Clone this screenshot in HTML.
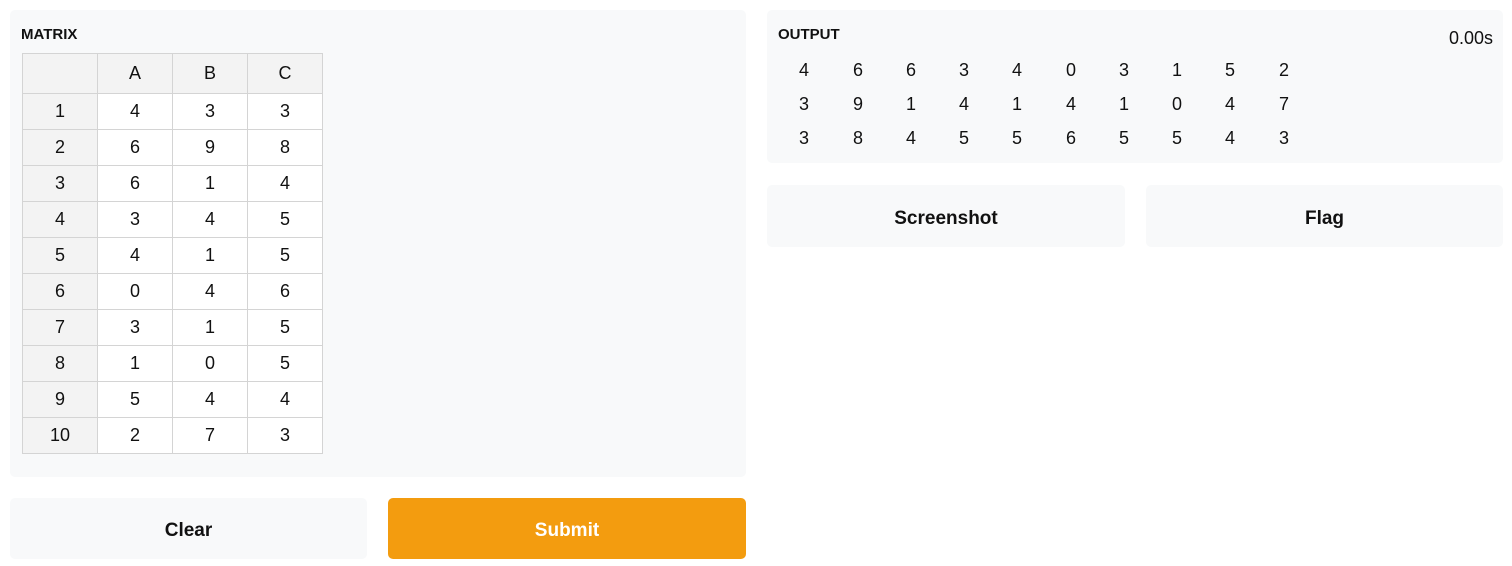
<!DOCTYPE html>
<html><head><style>
*{box-sizing:border-box;margin:0;padding:0}
body{width:1512px;height:566px;background:#fff;font-family:"Liberation Sans","DejaVu Sans",sans-serif;color:#111;position:relative;overflow:hidden}
.p{position:absolute;background:#f8f9fa;border-radius:5px}
.lbl{position:absolute;font-size:15px;font-weight:bold;letter-spacing:0}
table{position:absolute;left:22px;top:53px;border-collapse:collapse;font-size:18px}
td{width:75px;height:36px;border:1px solid #d4d4d4;text-align:center;background:#fff}
tr:first-child td{height:40px;background:#f3f3f3}
td:first-child{background:#f3f3f3}
.btn{position:absolute;border-radius:5px;background:#f8f9fa;font-size:19px;font-weight:bold;display:flex;align-items:center;justify-content:center;padding-top:5px}
.o{position:absolute;font-size:18px;width:30px;text-align:center}
</style></head><body>
<div class="p" style="left:10px;top:10px;width:736px;height:467px"></div>
<div class="lbl" style="left:21px;top:26px">MATRIX</div>
<table>
<tr><td></td><td>A</td><td>B</td><td>C</td></tr>
<tr><td>1</td><td>4</td><td>3</td><td>3</td></tr>
<tr><td>2</td><td>6</td><td>9</td><td>8</td></tr>
<tr><td>3</td><td>6</td><td>1</td><td>4</td></tr>
<tr><td>4</td><td>3</td><td>4</td><td>5</td></tr>
<tr><td>5</td><td>4</td><td>1</td><td>5</td></tr>
<tr><td>6</td><td>0</td><td>4</td><td>6</td></tr>
<tr><td>7</td><td>3</td><td>1</td><td>5</td></tr>
<tr><td>8</td><td>1</td><td>0</td><td>5</td></tr>
<tr><td>9</td><td>5</td><td>4</td><td>4</td></tr>
<tr><td>10</td><td>2</td><td>7</td><td>3</td></tr>
</table>
<div class="btn" style="left:10px;top:498px;width:357px;height:61px">Clear</div>
<div class="btn" style="left:388px;top:498px;width:358px;height:61px;background:#f39c0f;color:#fff">Submit</div>

<div class="p" style="left:767px;top:10px;width:736px;height:153px"></div>
<div class="lbl" style="left:778px;top:26px">OUTPUT</div>
<div style="position:absolute;right:19px;top:28px;font-size:18px">0.00s</div>
<div class="btn" style="left:767px;top:185px;width:358px;height:62px">Screenshot</div>
<div class="btn" style="left:1146px;top:185px;width:357px;height:62px">Flag</div>
<div class="o" style="left:789px;top:60px">4</div><div class="o" style="left:843px;top:60px">6</div><div class="o" style="left:896px;top:60px">6</div><div class="o" style="left:949px;top:60px">3</div><div class="o" style="left:1002px;top:60px">4</div><div class="o" style="left:1056px;top:60px">0</div><div class="o" style="left:1109px;top:60px">3</div><div class="o" style="left:1162px;top:60px">1</div><div class="o" style="left:1215px;top:60px">5</div><div class="o" style="left:1269px;top:60px">2</div>
<div class="o" style="left:789px;top:94px">3</div><div class="o" style="left:843px;top:94px">9</div><div class="o" style="left:896px;top:94px">1</div><div class="o" style="left:949px;top:94px">4</div><div class="o" style="left:1002px;top:94px">1</div><div class="o" style="left:1056px;top:94px">4</div><div class="o" style="left:1109px;top:94px">1</div><div class="o" style="left:1162px;top:94px">0</div><div class="o" style="left:1215px;top:94px">4</div><div class="o" style="left:1269px;top:94px">7</div>
<div class="o" style="left:789px;top:128px">3</div><div class="o" style="left:843px;top:128px">8</div><div class="o" style="left:896px;top:128px">4</div><div class="o" style="left:949px;top:128px">5</div><div class="o" style="left:1002px;top:128px">5</div><div class="o" style="left:1056px;top:128px">6</div><div class="o" style="left:1109px;top:128px">5</div><div class="o" style="left:1162px;top:128px">5</div><div class="o" style="left:1215px;top:128px">4</div><div class="o" style="left:1269px;top:128px">3</div>
</body></html>
